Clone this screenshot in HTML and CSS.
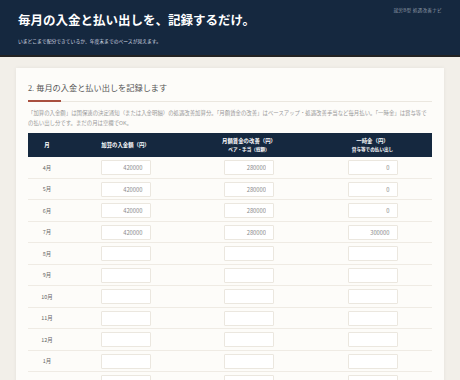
FILE: index.html
```html
<!DOCTYPE html>
<html lang="ja">
<head>
    <meta charset="UTF-8">
    <meta name="viewport" content="width=device-width, initial-scale=1.0">
    <title>就労B型 処遇改善ナビ</title>
    <link rel="stylesheet" href="styles.css">
</head>
<body>
    <header class="site-header">
        <div class="header-main">
            <h1 class="header-title">毎月の入金と払い出しを、記録するだけ。</h1>
            <p class="header-sub">いまどこまで配分できているか、年度末までのペースが見えます。</p>
        </div>
        <div class="header-brand">就労B型 処遇改善ナビ</div>
    </header>

    <main class="page">
        <section class="card">
            <h2 class="section-title">2. 毎月の入金と払い出しを記録します</h2>
            <p class="section-desc">「加算の入金額」は国保連の決定通知（または入金明細）の処遇改善加算分。「月額賃金の改善」はベースアップ・処遇改善手当など毎月払い。「一時金」は賞与等での払い出し分です。まだの月は空欄でOK。</p>

            <table class="record-table">
                <colgroup>
                    <col class="col-month">
                    <col class="col-income">
                    <col class="col-monthly">
                    <col class="col-bonus">
                </colgroup>
                <thead>
                    <tr>
                        <th>月</th>
                        <th>加算の入金額（円）</th>
                        <th>月額賃金の改善（円）<span class="th-sub">ベア・手当（総額）</span></th>
                        <th>一時金（円）<span class="th-sub">賞与等での払い出し</span></th>
                    </tr>
                </thead>
                <tbody>
                    <tr><td>4月</td><td><input class="amount" value="420000"></td><td><input class="amount" value="280000"></td><td><input class="amount" value="0"></td></tr>
                    <tr><td>5月</td><td><input class="amount" value="420000"></td><td><input class="amount" value="280000"></td><td><input class="amount" value="0"></td></tr>
                    <tr><td>6月</td><td><input class="amount" value="420000"></td><td><input class="amount" value="280000"></td><td><input class="amount" value="0"></td></tr>
                    <tr><td>7月</td><td><input class="amount" value="420000"></td><td><input class="amount" value="280000"></td><td><input class="amount" value="300000"></td></tr>
                    <tr><td>8月</td><td><input class="amount"></td><td><input class="amount"></td><td><input class="amount"></td></tr>
                    <tr><td>9月</td><td><input class="amount"></td><td><input class="amount"></td><td><input class="amount"></td></tr>
                    <tr><td>10月</td><td><input class="amount"></td><td><input class="amount"></td><td><input class="amount"></td></tr>
                    <tr><td>11月</td><td><input class="amount"></td><td><input class="amount"></td><td><input class="amount"></td></tr>
                    <tr><td>12月</td><td><input class="amount"></td><td><input class="amount"></td><td><input class="amount"></td></tr>
                    <tr><td>1月</td><td><input class="amount"></td><td><input class="amount"></td><td><input class="amount"></td></tr>
                    <tr><td>2月</td><td><input class="amount"></td><td><input class="amount"></td><td><input class="amount"></td></tr>
                    <tr><td>3月</td><td><input class="amount"></td><td><input class="amount"></td><td><input class="amount"></td></tr>
                </tbody>
            </table>
        </section>
    </main>
</body>
</html>
```

FILE: styles.css
```css
body {
    margin: 0;
    background-color: #f2efe9;
    font-family: "Noto Sans CJK JP", sans-serif;
    color: #555;
}
.site-header {
    display: flex;
    justify-content: space-between;
    align-items: flex-start;
    height: 57px;
    padding: 7px 18px 0;
    box-sizing: border-box;
    background-color: #15283f;
    border-bottom: 2px solid #232323;
}
.header-title {
    margin: 5px 0 0;
    font-family: "Liberation Serif", "Noto Sans CJK JP", serif;
    font-size: 12.5px;
    line-height: 18px;
    font-weight: bold;
    color: #fff;
}
.header-sub {
    margin: 7px 0 0;
    font-size: 4.8px;
    line-height: 8px;
    color: #d8dde5;
}
.header-brand {
    font-size: 4.7px;
    line-height: 6px;
    color: #8d97a6;
    letter-spacing: 0.2px;
}
.page {
    padding: 11px 16px 0;
}
.card {
    background-color: #fdfcf9;
    padding: 15px 12px 20px;
    box-shadow: 0 0 4px rgba(0, 0, 0, 0.06);
}
.section-title {
    position: relative;
    margin: 0;
    padding-bottom: 6px;
    border-bottom: 1px solid #ebe7df;
    font-family: "Liberation Serif", "Noto Sans CJK JP", serif;
    font-size: 8.2px;
    line-height: 12px;
    font-weight: normal;
    color: #555;
}
.section-title::after {
    content: "";
    position: absolute;
    left: 0;
    bottom: -1px;
    width: 33px;
    height: 2px;
    background-color: #a9503f;
}
.section-desc {
    margin: 6px 0 5px;
    font-size: 5.4px;
    line-height: 10px;
    color: #9a9a9a;
}
.record-table {
    width: 100%;
    border-collapse: collapse;
    table-layout: fixed;
}
.col-month { width: 38px; }
.col-income { width: 119px; }
.col-monthly { width: 128px; }
.col-bonus { width: 119px; }
.record-table th {
    height: 24px;
    padding: 0;
    background-color: #15283f;
    color: #fff;
    font-size: 5.4px;
    line-height: 8px;
    font-weight: bold;
    text-align: center;
    vertical-align: middle;
}
.th-sub {
    display: block;
    font-size: 4.6px;
}
.record-table td {
    padding: 3px 0 2.5px;
    border-bottom: 1px solid #efebe4;
    font-size: 5.4px;
    color: #666;
    text-align: center;
}
.amount {
    display: block;
    width: 50px;
    height: 15px;
    margin: 0 auto;
    padding: 0 7px 0 0;
    box-sizing: border-box;
    border: 1px solid #ebe7df;
    border-radius: 1px;
    background-color: #fff;
    font-family: "Noto Sans CJK JP", sans-serif;
    font-size: 5.8px;
    color: #8a8a8a;
    text-align: right;
}
```
